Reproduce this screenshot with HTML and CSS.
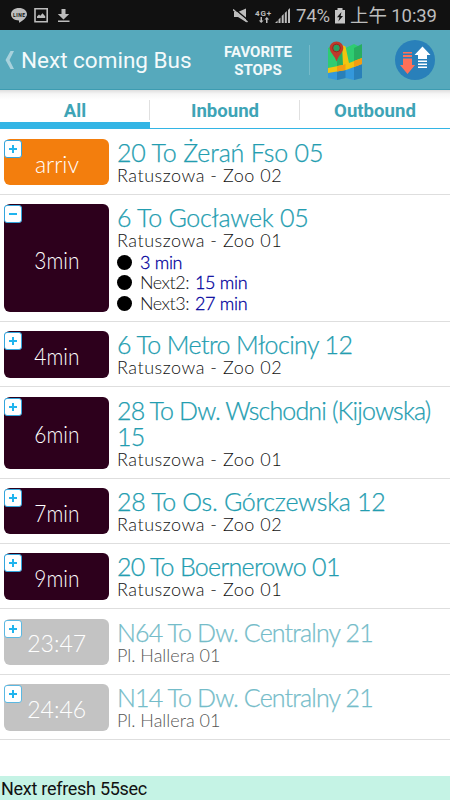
FILE: index.html
```
<!DOCTYPE html>
<html lang="en">
<head>
<meta charset="utf-8">
<title>Next coming Bus</title>
<link rel="stylesheet" href="styles.css">
</head>
<body>
<div class="status">
  <svg class="status-left" width="70" height="30" viewBox="0 0 70 30">
    <path fill="#bdbdbd" d="M19 8c4.600 0 8 2.700 8 6.200 0 3.200-4 6.300-8 8.600v-2.400c-4.700 0-8-2.700-8-6.200S14.400 8 19 8z"/>
    <text x="13" y="16.500" class="line-word" textLength="12">LINE</text>
    <path fill="none" stroke="#bdbdbd" stroke-width="1.600" d="M35 8.800h12.200v13H35z"/>
    <path fill="#bdbdbd" d="M37 18v-1.500l2-2 1.300 1.300 2.200-2.500 2.700 3V18z"/>
    <path fill="#bdbdbd" d="M61.500 9h4v5h3.700l-5.700 5.500L57.800 14h3.700zM58 20.500h11.500V22H58z"/>
  </svg>
  <svg class="status-signal" width="62" height="30" viewBox="0 0 62 30">
    <path fill="#bdbdbd" d="M1 12h4l8-3.500V22l-8-5H1z"/>
    <path stroke="#111" stroke-width="1.500" d="M1 8.500l14.500 12"/>
    <path stroke="#bdbdbd" stroke-width="1.600" d="M0 9.500l14.500 12.500"/>
    <text x="22" y="15.500" class="net" textLength="16">4G+</text>
    <path fill="#bdbdbd" d="M27.500 17v3.500h-1.700l2.400 2.500 2.400-2.500H29V17zM33 23v-3.500h-1.500l2.300-2.500 2.400 2.500h-1.700V23z"/>
    <path fill="#bdbdbd" d="M42 23l2.600-2.500V23zM45.500 19.500l2-2V23h-2zM48.700 16l2-2v9h-2zM51.800 13l2-2v12h-2zM55 10l2-2v15h-2z"/>
  </svg>
  <span class="percent">74%</span>
  <svg class="battery" width="12" height="16" viewBox="0 0 12 16">
    <path fill="#c5c5c5" fill-rule="evenodd" d="M3.500 0h5v2H11v13.500H1V2h2.500zM7.500 4L3 9.300h2.500L4.300 13.500 9 8H6.600z"/>
  </svg>
  <span class="clock">上午 10:39</span>
</div>
<header class="bar">
  <svg class="back" width="10" height="20" viewBox="0 0 10 20"><path fill="#a8d2dc" d="M5.500 1H9L4.500 10 9 19H5.500L.5 10z"/></svg>
  <h1 class="title">Next coming Bus</h1>
  <div class="fav">FAVORITE<br>STOPS</div>
  <div class="divider"></div>
  <svg class="map" width="36" height="40" viewBox="0 0 36 40">
    <path fill="#2ecc71" d="M1 7l9-4 8.500 4 8.500-4 8 4v30l-8-3-8.500 3-8.500-3-9 3z"/>
    <path fill="#27ae60" d="M10 3l8.500 4v19L10 28zM27 7l8-4v15l-8 3z"/>
    <path fill="#3498db" d="M1 29l9-2 8.500-2 8.500-3.500 8-3V37l-8 2-8.500-2-8.500 2-9-2z"/>
    <path fill="#2980b9" d="M10 27l8.500-2v12L10 39zM27 21l8-3v19l-8 2z"/>
    <path fill="#f1c40f" d="M15 4l3.500 1.500L22 22l13-5v6l-16 6-18 3v-5l15-3z"/>
    <path fill="#f39c12" d="M10 25l6-1 2.500-1v6L10 30.500zM27 20l8-3v6l-8 3z"/>
    <path fill="#c0392b" d="M9.500.5c4 0 6.800 3 6.800 6.600 0 4-5 8-6.800 13.400C8 15 2.700 11.500 2.700 7.100 2.700 3.500 5.500.5 9.500.5z"/>
    <circle cx="9.500" cy="7" r="3.300" fill="#27a060"/>
    <circle cx="9.500" cy="7" r="3.900" fill="none" stroke="#8f2b20" stroke-width="1"/>
  </svg>
  <svg class="swap" width="40" height="40" viewBox="0 0 40 40">
    <circle cx="20" cy="20" r="20" fill="#2980ba"/>
    <path fill="#ff7058" d="M8 12h9v1.500H8zM8 15h9v2H8zM8 18.500h9V25h3l-7.500 9L5 25h3z"/>
    <path fill="#fff" d="M27.500 6.500l8 8.500H32v4h-9v-4h-3.500zM23 20.500h9V22h-9zM23 23.500h9V25h-9zM23 26.500h9V28h-9z"/>
  </svg>
</header>
<nav class="tabs">
  <div class="tab active">All</div>
  <div class="tab">Inbound</div>
  <div class="tab">Outbound</div>
</nav>
<main class="list">
  <section class="row">
    <div class="tile arriving"><i class="toggle plus"></i><span>arriv</span></div>
    <div class="info"><div class="route r1">20 To Żerań Fso 05</div><div class="stop">Ratuszowa - Zoo 02</div></div>
  </section>
  <section class="row">
    <div class="tile"><i class="toggle"></i><span>3min</span></div>
    <div class="info"><div class="route r2">6 To Gocławek 05</div><div class="stop">Ratuszowa - Zoo 01</div>
      <div class="next"><b class="dot"></b><em>3 min</em></div>
      <div class="next"><b class="dot"></b><span>Next2:</span><em>15 min</em></div>
      <div class="next"><b class="dot"></b><span>Next3:</span><em>27 min</em></div>
    </div>
  </section>
  <section class="row">
    <div class="tile"><i class="toggle plus"></i><span>4min</span></div>
    <div class="info"><div class="route r3">6 To Metro Młociny 12</div><div class="stop">Ratuszowa - Zoo 02</div></div>
  </section>
  <section class="row">
    <div class="tile"><i class="toggle plus"></i><span>6min</span></div>
    <div class="info"><div class="route r4">28 To Dw. Wschodni (Kijowska)<br>15</div><div class="stop">Ratuszowa - Zoo 01</div></div>
  </section>
  <section class="row">
    <div class="tile"><i class="toggle plus"></i><span>7min</span></div>
    <div class="info"><div class="route r5">28 To Os. Górczewska 12</div><div class="stop">Ratuszowa - Zoo 02</div></div>
  </section>
  <section class="row">
    <div class="tile"><i class="toggle plus"></i><span>9min</span></div>
    <div class="info"><div class="route r6">20 To Boernerowo 01</div><div class="stop">Ratuszowa - Zoo 01</div></div>
  </section>
  <section class="row late">
    <div class="tile"><i class="toggle plus"></i><span>23:47</span></div>
    <div class="info"><div class="route r7">N64 To Dw. Centralny 21</div><div class="stop">Pl. Hallera 01</div></div>
  </section>
  <section class="row late">
    <div class="tile"><i class="toggle plus"></i><span>24:46</span></div>
    <div class="info"><div class="route r8">N14 To Dw. Centralny 21</div><div class="stop">Pl. Hallera 01</div></div>
  </section>
</main>
<footer class="refresh">Next refresh 55sec</footer>
</body>
</html>
```
FILE: styles.css
```
* { box-sizing: border-box; }
body {
  margin: 0;
  width: 450px;
  height: 800px;
  display: flex;
  flex-direction: column;
  overflow: hidden;
  background: #fff;
  font-family: Roboto, "Noto Sans CJK TC", sans-serif;
}
.status {
  flex: none;
  height: 30px;
  display: flex;
  align-items: center;
  background: #111;
  color: #bdbdbd;
  white-space: nowrap;
}
.status-left { flex: none; }
.line-word { font: bold 5px Roboto, sans-serif; fill: #111; }
.status-signal { flex: none; margin-left: 163px; }
.net { font: bold 8px Roboto, sans-serif; fill: #bdbdbd; }
.percent { width: 37px; margin-left: 1px; font-size: 18.500px; line-height: 30px; letter-spacing: -0.1px; padding-top: 2px; }
.battery { flex: none; margin-left: 1px; margin-top: 2px; }
.clock { margin-left: 4px; font-size: 18.500px; line-height: 30px; letter-spacing: -0.1px; padding-top: 2px; }

.bar {
  flex: none;
  height: 60px;
  display: flex;
  align-items: center;
  background: #56a9bc;
  border-bottom: 1px solid #3d9cb1;
  color: #fff;
}
.back { margin-left: 5px; flex: none; }
.title { margin: 1px 0 0 6px; width: 190px; font-size: 22.5px; font-weight: 400; white-space: nowrap; letter-spacing: 0; color: #f4fafb; }
.fav { margin-left: 9px; width: 76px; text-align: center; font-size: 15px; line-height: 18px; font-weight: 700; color: #f2f9fa; padding-top: 2px; }
.divider { margin-left: 13px; width: 1px; height: 30px; background: #76bac9; }
.map { margin-left: 17px; margin-top: 2px; flex: none; }
.swap { margin-left: 32px; margin-top: 1px; flex: none; }

.tabs {
  flex: none;
  height: 39.500px;
  display: flex;
  background: linear-gradient(#dedede, #f6f6f6 4px, #fff 10px);
}
.tab {
  flex: 1;
  height: 39px;
  padding-top: 10px;
  line-height: 22px;
  text-align: center;
  font-size: 18.600px;
  font-weight: 700;
  color: #3ea4b6;
  border-bottom: 1px solid #33b5e5;
  position: relative;
}
.tab + .tab::before {
  content: "";
  position: absolute;
  left: -1px;
  top: 10px;
  width: 1px;
  height: 20px;
  background: #e0e0e0;
}
.tab.active { border-bottom: 7px solid #33b5e5; }

.list { flex: 1; font-family: Lato, sans-serif; font-weight: 300; }
.row {
  display: flex;
  gap: 8px;
  padding: 9.400px 0 8.500px 4px;
  border-bottom: 1px solid #dedede;
}
.tile {
  position: relative;
  width: 105px;
  flex: none;
  display: flex;
  align-items: center;
  justify-content: center;
  padding-top: 3px;
  border-radius: 6px;
  background: #2d001c;
  color: #fff;
  font-size: 24px;
  line-height: 28px;
}
.tile span { transform: scaleX(0.87); }
.arriving { background: #f37e0d; }
.tile.arriving span, .late .tile span { transform: scaleX(0.96); }
.toggle {
  position: absolute;
  left: 0;
  top: 1px;
  width: 18px;
  height: 18px;
  border: 1px solid #33a5dd;
  border-radius: 3px;
  background: #fff;
}
.toggle::before, .toggle.plus::after {
  content: "";
  position: absolute;
  left: 4px;
  top: 7px;
  width: 8px;
  height: 2px;
  background: #20b4ee;
}
.toggle.plus::after { left: 7px; top: 4px; width: 2px; height: 8px; }
.info { flex: 1; white-space: nowrap; }
.route { font-size: 25px; line-height: 26px; color: #239db0; -webkit-text-stroke: 0.25px #239db0; }
.r1 { letter-spacing: -0.15px; }
.r2 { letter-spacing: -0.25px; }
.r3 { letter-spacing: -0.57px; }
.r4 { letter-spacing: -0.85px; }
.r5 { letter-spacing: -0.3px; }
.r6 { letter-spacing: -0.7px; }
.r7, .r8 { letter-spacing: -0.85px; }
.stop, .next { font-size: 18px; line-height: 20.500px; color: #111; }
.stop { letter-spacing: 0.52px; }
.next { display: flex; align-items: center; position: relative; top: 1px; }
.dot { width: 15px; height: 15px; margin-right: 8px; border-radius: 50%; background: #000; }
.next span { margin-right: 6px; letter-spacing: -0.5px; }
.next em { font-style: normal; letter-spacing: -0.3px; color: #00009c; -webkit-text-stroke: 0.3px #00009c; }
.late .tile { background: #c3c3c3; }
.late .route { color: #74bcc9; -webkit-text-stroke-color: #74bcc9; }
.late .stop { color: #555; letter-spacing: 0; }
.late .toggle { border-color: #5bb8e2; }

.refresh {
  flex: none;
  height: 24px;
  padding-left: 1px;
  line-height: 26px;
  font-size: 18px;
  letter-spacing: -0.28px;
  color: #111;
  background: #c5f3e5;
}
```
